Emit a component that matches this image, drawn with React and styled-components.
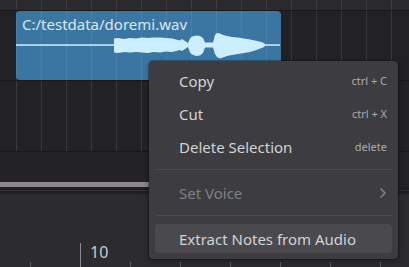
import styled, { createGlobalStyle } from "styled-components";

const GlobalStyle = createGlobalStyle`
  html, body {
    margin: 0;
    padding: 0;
    background: #2c2b2f;
    overflow: hidden;
  }
  #root {
    width: 409px;
    height: 267px;
  }
`;

const Editor = styled.div`
  position: relative;
  width: 409px;
  height: 267px;
  display: flex;
  flex-direction: column;
  font-family: "Noto Sans", "Open Sans", sans-serif;
  overflow: hidden;
`;

const gridLines = (color) => `
  background-image: linear-gradient(to right, ${color} 1px, transparent 1px);
  background-size: 25px 100%;
  background-position: 16px 0;
`;

const TopRuler = styled.div`
  height: 10px;
  flex: none;
  background-color: #2a292d;
  ${gridLines("#3d3c40")}
  border-bottom: 1px solid #19191b;
`;

const TrackRow = styled.div`
  height: 69px;
  flex: none;
  display: flex;
  background-color: #222224;
  ${gridLines("#38373b")}
  border-bottom: 1px solid #19191b;
`;

const Clip = styled.div`
  margin-left: 16px;
  width: 265px;
  height: 69px;
  border-radius: 4px;
  background-color: #3b76a2;
  background-image: linear-gradient(to right, rgba(255, 255, 255, 0.06) 1px, transparent 1px);
  background-size: 25px 100%;
  background-position: 0 0;
  display: flex;
  flex-direction: column;
`;

const ClipTitle = styled.div`
  padding: 4px 0 0 6px;
  height: 18px;
  line-height: 18px;
  font-size: 15px;
  color: #dbe7f1;
  white-space: nowrap;
`;

const Wave = styled.svg`
  display: block;
`;

const TrackEmpty = styled.div`
  height: 70px;
  flex: none;
  background-color: #222224;
  ${gridLines("#38373b")}
  border-bottom: 1px solid #19191b;
`;

const Band = styled.div`
  height: 30px;
  flex: none;
  background: #232325;
`;

const ScrollTrack = styled.div`
  height: 5px;
  flex: none;
  background: #232325;
  display: flex;
`;

const ScrollThumb = styled.div`
  width: 392px;
  background: #8b868c;
`;

const Divider = styled.div`
  height: 7px;
  flex: none;
  background: #1f1f21;
  display: flex;
  align-items: center;
  &::after {
    content: "";
    display: block;
    width: 100%;
    height: 1px;
    background: #313034;
  }
`;

const Lower = styled.div`
  flex: 1;
  background: #2c2b2f;
  display: flex;
  flex-direction: column;
  justify-content: flex-end;
`;

const Ruler = styled.div`
  position: relative;
  height: 24px;
  background-image:
    linear-gradient(to right, #8c8b8f 1px, transparent 1px),
    linear-gradient(to right, #5c5b5f 1px, transparent 1px);
  background-size: 400px 100%, 50px 5px;
  background-position: 80px 0, 30px 100%;
  background-repeat: repeat-x, repeat-x;
`;

const BarLabel = styled.span`
  position: absolute;
  left: 90px;
  top: -1px;
  font-size: 16px;
  line-height: 20px;
  color: #cbcbcd;
`;

const Menu = styled.div`
  position: absolute;
  left: 149px;
  top: 61px;
  width: 249px;
  box-sizing: border-box;
  padding: 3px 6px 4px;
  background: #3d3c40;
  border-radius: 4px;
  box-shadow: 0 0 0 1px rgba(0, 0, 0, 0.22), 0 2px 6px rgba(0, 0, 0, 0.35);
  display: flex;
  flex-direction: column;
`;

const Item = styled.div`
  height: 29px;
  margin: 2px 0;
  padding: 0 5px 0 24px;
  border-radius: 4px;
  display: flex;
  align-items: center;
  justify-content: space-between;
  font-size: 15px;
  color: ${(p) => (p.$disabled ? "#808084" : "#d3d3d5")};
  background: ${(p) => (p.$active ? "#4a494d" : "transparent")};
`;

const Shortcut = styled.span`
  font-size: 11px;
  color: #ababae;
`;

const Separator = styled.div`
  height: 1px;
  margin: 6px 0;
  background: #4b4a4e;
`;

const wave = [
  [114, 38.5, 52.5], [118, 38, 53], [124, 39, 52], [130, 38, 52.5],
  [136, 38.5, 52], [142, 37.5, 52.5], [148, 38, 53], [154, 37.5, 52],
  [160, 37.5, 52.5], [166, 38, 51.5], [172, 38.5, 52], [176, 39.5, 51],
  [180, 40.5, 50], [182, 39, 51], [185, 41, 49], [188, 43, 47],
  [190, 38.5, 52.5], [192, 36.5, 54.5], [196, 35.5, 56], [200, 36, 55.5],
  [203, 38, 53], [205, 42.5, 47.5], [213, 42.5, 47.5], [215, 35, 54],
  [217, 33, 57], [220, 33.5, 58.5], [223, 35, 57.5], [227, 36, 56],
  [232, 37, 55], [238, 37.5, 54], [244, 38.5, 53], [250, 39.5, 52],
  [255, 40.5, 50.5], [259, 41.5, 49], [263, 42.5, 47.5], [265, 44, 46],
];

function Waveform() {
  const ox = 16;
  const oy = 33;
  const top = wave.map(([x, t]) => `${x - ox},${t - oy}`);
  const bottom = [...wave].reverse().map(([x, , b]) => `${x - ox},${b - oy}`);
  return (
    <Wave width="265" height="28" viewBox="0 0 265 28">
      <rect x="0" y="11.3" width="264" height="1.5" fill="#cdeeff" />
      <polygon points={[...top, ...bottom].join(" ")} fill="#cdeeff" />
    </Wave>
  );
}

function Chevron() {
  return (
    <svg width="8" height="12" viewBox="0 0 8 12">
      <path d="M1.5 1.5 L6 6 L1.5 10.5" fill="none" stroke="#808084" strokeWidth="1.6" />
    </svg>
  );
}

export default function App() {
  return (
    <>
      <GlobalStyle />
      <Editor>
        <TopRuler />
        <TrackRow>
          <Clip>
            <ClipTitle>C:/testdata/doremi.wav</ClipTitle>
            <Waveform />
          </Clip>
        </TrackRow>
        <TrackEmpty />
        <Band />
        <ScrollTrack>
          <ScrollThumb />
        </ScrollTrack>
        <Divider />
        <Lower>
          <Ruler>
            <BarLabel>10</BarLabel>
          </Ruler>
        </Lower>

        <Menu>
          <Item>
            Copy<Shortcut>ctrl + C</Shortcut>
          </Item>
          <Item>
            Cut<Shortcut>ctrl + X</Shortcut>
          </Item>
          <Item>
            Delete Selection<Shortcut>delete</Shortcut>
          </Item>
          <Separator />
          <Item $disabled>
            Set Voice<Chevron />
          </Item>
          <Separator />
          <Item $active>Extract Notes from Audio</Item>
        </Menu>
      </Editor>
    </>
  );
}
